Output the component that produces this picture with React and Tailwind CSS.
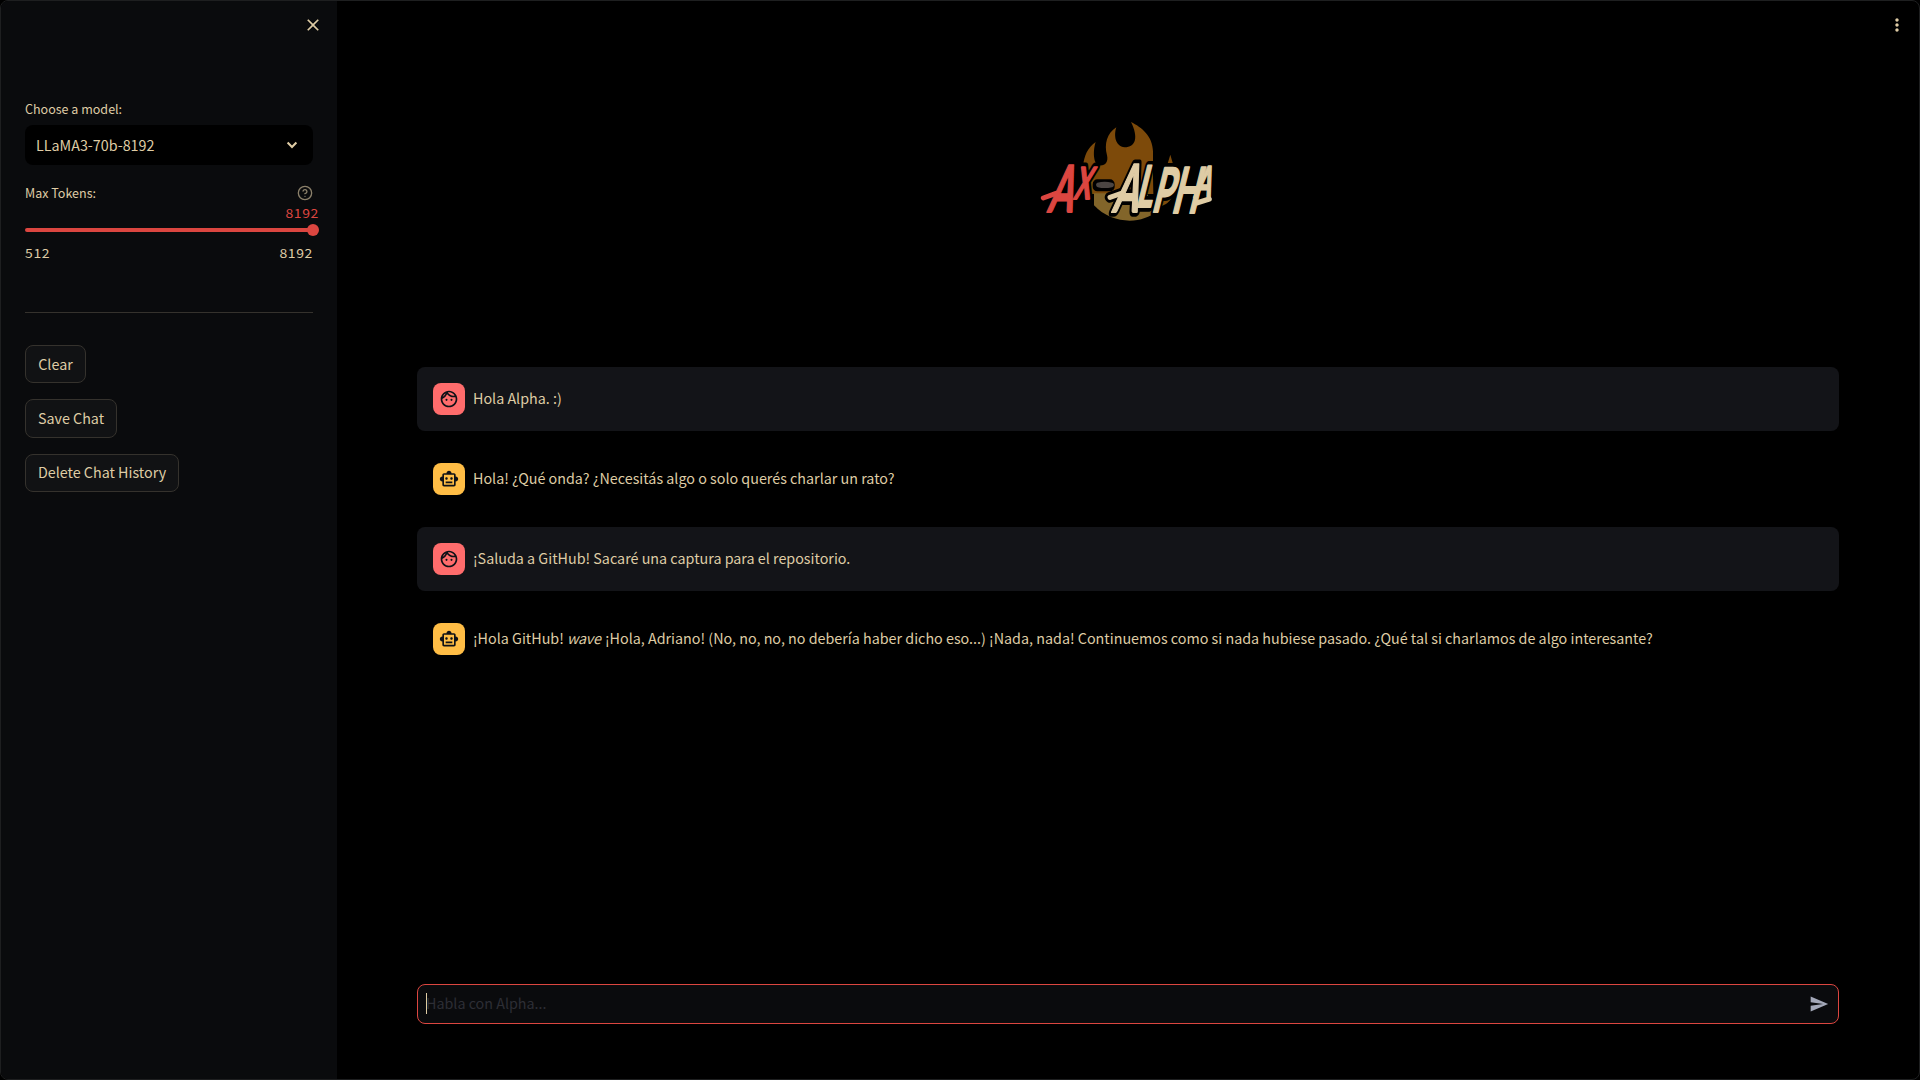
import { MdClose, MdMoreVert, MdOutlineFace, MdOutlineSmartToy, MdSend } from "react-icons/md";
import { FiHelpCircle } from "react-icons/fi";

const messages = [
  { role: "user", text: "Hola Alpha. :)" },
  { role: "bot", text: "Hola! ¿Qué onda? ¿Necesitás algo o solo querés charlar un rato?" },
  { role: "user", text: "¡Saluda a GitHub! Sacaré una captura para el repositorio." },
  {
    role: "bot",
    text: (
      <>
        ¡Hola GitHub! <em className="mr-[1.2px] tracking-[-0.3px]">wave</em> ¡Hola, Adriano! (No, no, no, no debería haber dicho eso...) ¡Nada, nada! Continuemos como si nada hubiese pasado. ¿Qué tal si charlamos de algo interesante?
      </>
    ),
  },
];

const slant = "skewX(-14) scale(0.55 1)";

function Logo() {
  return (
    <svg className="mx-auto block font-['Lato',sans-serif] font-bold" width="210" height="120" viewBox="0 0 630 360" strokeLinecap="round" strokeLinejoin="round">
      <defs>
        <text id="logo-ax" transform={slant}>
          <tspan x="286" y="307" fontSize="194">A</tspan>
          <tspan x="412" y="268" fontSize="132">X</tspan>
        </text>
        <text id="logo-alpha" transform={slant}>
          <tspan x="640" y="307" fontSize="198">A</tspan>
          <tspan x="758" y="290" fontSize="172">L</tspan>
          <tspan x="852" y="306" fontSize="184">P</tspan>
          <tspan x="960" y="308" fontSize="190">H</tspan>
          <tspan x="1066" y="260" fontSize="128">A</tspan>
        </text>
      </defs>
      <path fill="#7d4a0a" d="M333 36C365 52 398 78 399 124L399 200L400 252L210 252L190 165C192 140 203 112 227 96C219 120 219 160 236 166C254 169 266 158 261 136C252 103 261 69 289 52C281 76 285 109 314 112C347 112 356 82 333 36Z" />
      <path fill="#7d4a0a" d="M451 134L460 166L440 170ZM425 262L455 262C449 276 437 284 424 289Z" />
      <path fill="#82652a" d="M222 250L380 250L410 304C368 342 278 346 222 286Z" />
      {/* Dark halo round the lettering and its brush flourishes */}
      <path d="M70 264L112 250M270 262L304 250M530 279L568 267" fill="none" stroke="#000" strokeWidth="32" />
      <g stroke="#000" strokeWidth="28">
        <use href="#logo-ax" />
        <use href="#logo-alpha" />
      </g>
      <rect x="218" y="208" width="66" height="36" rx="14" fill="#000" />
      <path fill="#4b4542" d="M232 218Q254 213 276 218Q284 220 281 228Q278 234 254 234Q232 234 229 228Q226 221 232 218Z" />
      <path d="M70 264L108 250" stroke="#dc4640" strokeWidth="15" />
      <path d="M270 262L304 250M530 279L568 267" stroke="#dfcca5" strokeWidth="15" />
      <use href="#logo-ax" fill="#dc4640" stroke="#dc4640" strokeWidth="6" />
      <use href="#logo-alpha" fill="#dfcca5" stroke="#dfcca5" strokeWidth="6" />
    </svg>
  );
}

function Message({ role, text }) {
  const user = role === "user";
  return (
    <div className={"flex h-16 items-center gap-2 rounded-lg px-4 " + (user ? "bg-[#131418]" : "")}>
      <div className={"flex size-8 shrink-0 items-center justify-center rounded-lg text-[#0e1117] " + (user ? "bg-[#ff6c6c]" : "bg-[#ffbd45]")}>
        {user ? <MdOutlineFace size={20} /> : <MdOutlineSmartToy size={20} />}
      </div>
      <p className="mb-0.5 whitespace-nowrap text-[14.32px] leading-6">{text}</p>
    </div>
  );
}

function Button({ children, className }) {
  return (
    <button className={"flex items-center justify-center rounded-lg border border-[#35322d] bg-[#111214] text-[14.32px] leading-6 whitespace-nowrap " + className}>
      {children}
    </button>
  );
}

export default function App() {
  return (
    <div className="h-[1080px] w-[1920px] bg-black font-['Noto_Sans_CJK_SC','Noto_Sans',sans-serif] text-[#dfcca5]">
      <div className="flex h-full overflow-hidden rounded-lg border border-[#1e1f20]">
        <aside className="w-[336px] shrink-0 bg-[#0a0b0d] px-6">
          <div className="flex h-12 items-center justify-end">
            <MdClose size={20} className="-mr-2.5" />
          </div>
          <p className="mt-[49px] text-[12.53px] leading-[21px]">Choose a model:</p>
          <div className="mt-1.5 flex h-10 items-center justify-between rounded-lg bg-black pr-[11px] pl-[11px]">
            <span className="text-[14.32px] leading-6">LLaMA3-70b-8192</span>
            <svg width="20" height="20" viewBox="0 0 20 20" fill="none" stroke="currentColor" strokeWidth="2.1">
              <path d="M5.6 7.6L10 12L14.4 7.6" />
            </svg>
          </div>
          <div className="mt-[17px] flex h-[21px] items-center justify-between">
            <span className="text-[12.53px] leading-[21px]">Max Tokens:</span>
            <FiHelpCircle size={16} className="text-[#8b806a]" />
          </div>
          <div className="-mr-1.5 flex h-5 items-center justify-end text-[12.53px] leading-5 tracking-[0.54px] text-[#dc4640]">
            <span className="origin-right scale-x-[1.12]">8192</span>
          </div>
          <div className="mt-px flex h-3 items-center">
            <div className="h-1 flex-1 rounded-full bg-[#dc4640]" />
            <div className="-mr-1.5 -ml-1.5 size-3 rounded-full bg-[#dc4640]" />
          </div>
          <div className="mt-[7px] flex h-5 items-center justify-between text-[12.53px] leading-5 tracking-[0.54px]">
            <span className="origin-left scale-x-[1.12]">512</span>
            <span className="origin-right scale-x-[1.12]">8192</span>
          </div>
          <div className="mt-[49px] h-px bg-[#35322d]" />
          <div className="mt-8 flex flex-col items-start gap-4">
            <Button className="h-[38px] w-[61px]">Clear</Button>
            <Button className="h-[39px] w-[92px] pb-px">Save Chat</Button>
            <Button className="h-[38px] w-[154px] pb-0.5">Delete Chat History</Button>
          </div>
        </aside>
        <main className="flex flex-1 flex-col">
          <div className="flex h-12 items-center justify-end pr-3">
            <MdMoreVert size={20} />
          </div>
          <div className="mt-[61px] h-[120px] pr-[7px]"><Logo /></div>
          <section className="mt-[137px] mr-20 ml-20 flex flex-col gap-4">
            {messages.map((m, i) => (
              <Message key={i} role={m.role} text={m.text} />
            ))}
          </section>
          <div className="mt-auto mr-20 mb-[55px] ml-20 flex h-10 items-center rounded-lg border border-[#dc4640] bg-[#0a0b0d] pr-[9px] pl-2">
            <span className="mb-px h-[21px] w-px bg-[#dfcca5]" />
            <span className="-ml-px mb-0.5 flex-1 text-[14.32px] leading-6 text-[#2d2e35]">Habla con Alpha...</span>
            <MdSend size={20} className="text-[#a3a8b8]" />
          </div>
        </main>
      </div>
    </div>
  );
}
